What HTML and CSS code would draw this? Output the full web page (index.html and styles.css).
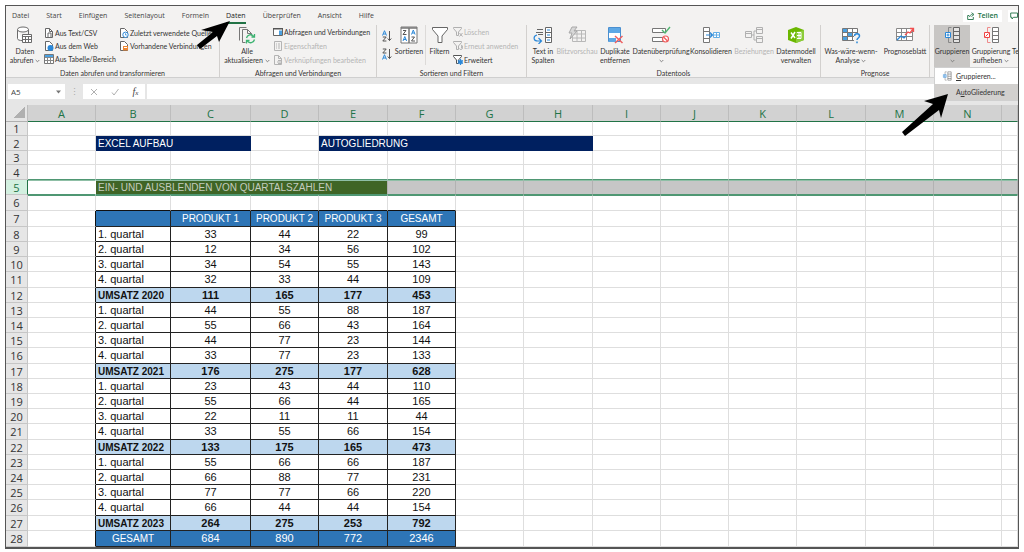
FILE: index.html
```html
<!DOCTYPE html>
<html lang="de">
<head>
<meta charset="utf-8">
<title>Excel – AutoGliederung</title>
<link rel="stylesheet" href="styles.css">
</head>
<body>
<svg class="sprite" aria-hidden="true">
  <symbol id="i-db" viewBox="0 0 18 18"><g fill="#fff" stroke="#6b6b6b"><path d="M1.500 3.500v9c0 1.500 2 2 5 2"/><path d="M12.500 8V3.500"/><ellipse cx="7" cy="3.500" rx="5.500" ry="2.500"/><path d="M6.500 8.500h9v8h-9z"/><path d="M6.500 10.500h9M6.500 13.500h9M9.500 10.500v6M12.500 10.500v6"/></g></symbol>
  <symbol id="i-csv" viewBox="0 0 10 10"><path d="M1.500.500h4l3 3v6h-7z" fill="#fff" stroke="#666"/><path d="M5.500.500v3h3M4 9V5h3v4" fill="none" stroke="#666"/></symbol>
  <symbol id="i-web" viewBox="0 0 10 10"><path d="M1.500.500h4l3 3v6h-7z" fill="#fff" stroke="#666"/><circle cx="6.500" cy="7" r="3" fill="#2b88d8"/></symbol>
  <symbol id="i-tab" viewBox="0 0 10 10"><path d="M.500.500h9v9h-9z" fill="#fff" stroke="#777"/><path d="M1 1h8v2H1z" fill="#4ba0e0"/><path d="M1 3.500h8M1 6.500h8M3.500 3.500v6M6.500 3.500v6" stroke="#888"/></symbol>
  <symbol id="i-recent" viewBox="0 0 10 10"><path d="M1.500.500h4l3 3v6h-7z" fill="#fff" stroke="#666"/><circle cx="6.500" cy="6.800" r="2.700" fill="#fff" stroke="#2b88d8"/><path d="M6.500 5.300v1.700h1.300" fill="none" stroke="#2b88d8" stroke-width=".8"/></symbol>
  <symbol id="i-conn" viewBox="0 0 10 10"><path d="M1.500.500h4l3 3v6h-7z" fill="#fff" stroke="#666"/><path d="M4 5h5v4.500H4z" fill="#ed8733"/><path d="M5 6.500h3" stroke="#fff"/></symbol>
  <symbol id="i-refresh" viewBox="0 0 18 18"><path d="M1.500 14.500v-13h7M4.500 16.500v-13h5l4 4v2M9.500 3.500v4h4M4.500 16.500h3" fill="none" stroke="#777"/><path d="M8.500 12a4 4 0 0 1 7.200-1.500M16.500 13.500a4 4 0 0 1-7.200 1.500M16.500 8v3h-3M8.500 17.500v-3h3" fill="none" stroke="#3cb371" stroke-width="1.300"/></symbol>
  <symbol id="i-pane" viewBox="0 0 10 10"><path d="M.500 1.500h9v7h-9z" fill="#fff" stroke="#666"/><path d="M0 1h10v1.500H0z" fill="#555"/><path d="M6 3.500h3v4.500H6z" fill="#4ba0e0"/></symbol>
  <symbol id="i-prop" viewBox="0 0 10 10"><path d="M1.500.500h7v9h-7z" fill="none" stroke="#b4b4b4"/><path d="M3 3h1M5 3h2M3 5h1M5 5h2M3 7h1M5 7h2" stroke="#b4b4b4"/></symbol>
  <symbol id="i-link" viewBox="0 0 10 10"><path d="M1.500.500h4l3 3v6h-7zM5.500.500v3h3" fill="none" stroke="#b4b4b4"/><path d="M4 7h5M5 5.500h3M5 8.500h3" stroke="#b4b4b4"/></symbol>
  <symbol id="i-sort" viewBox="0 0 18 18"><path d="M1 1h16v16H1z" fill="#fff" stroke="#777"/><path d="M1 2h16M9 2v15" stroke="#777" stroke-width="1.500"/><path d="M3 4.500h3L3 8.500h3.500M11.500 11h3l-3 4H15" fill="none" stroke="#555"/><path d="M3 15l1.800-4.500L6.600 15M3.600 13.500h2.400M11.500 8.500l1.800-4.500 1.800 4.500M12.100 7h2.400" fill="none" stroke="#2b88d8"/></symbol>
  <symbol id="i-az" viewBox="0 0 10 12"><path d="M.500 5.500L2.500.700l2 4.800M1.200 4h2.600" fill="none" stroke="#2b88d8"/><path d="M.800 7h3.400L.800 11h3.600" fill="none" stroke="#555"/><path d="M7.500 1v9.500M5.700 8.500l1.800 2 1.800-2" fill="none" stroke="#555"/></symbol>
  <symbol id="i-za" viewBox="0 0 10 12"><path d="M.800 1h3.400L.800 5h3.600" fill="none" stroke="#555"/><path d="M.500 11.500l2-4.800 2 4.800M1.200 10h2.600" fill="none" stroke="#2b88d8"/><path d="M7.500 1v9.500M5.700 8.500l1.800 2 1.800-2" fill="none" stroke="#555"/></symbol>
  <symbol id="i-filter" viewBox="0 0 18 18"><path d="M1.500 1.500h15v2L11 10v6.500H7V10L1.500 3.500z" fill="#fff" stroke="#666"/></symbol>
  <symbol id="i-fclear" viewBox="0 0 10 10"><path d="M.500.500h8v1l-3 3.500v3.500h-2V5l-3-3.500z" fill="none" stroke="#b0b0b0"/><path d="M6.500 6l3 3.500M9.500 6l-3 3.500" stroke="#b0b0b0"/></symbol>
  <symbol id="i-fredo" viewBox="0 0 10 10"><path d="M.500.500h8v1l-3 3.500v3.500h-2V5l-3-3.500z" fill="none" stroke="#b0b0b0"/><path d="M6.500 7.500a1.500 1.500 0 1 0 1.500-2M8 4l2 1.500L8 7" fill="none" stroke="#b0b0b0"/></symbol>
  <symbol id="i-fadv" viewBox="0 0 10 10"><path d="M.500.500h8v1l-3 3.500v3.500h-2V5l-3-3.500z" fill="#fff" stroke="#555"/><path d="M7.500 4v6M4.800 5.500l5.200 3M4.800 8.500l5.200-3" stroke="#2b88d8" stroke-width="1.200"/><circle cx="7.500" cy="7" r="2" fill="#2b88d8"/></symbol>
  <symbol id="i-text" viewBox="0 0 20 18"><path d="M4 3.500h6M3 6.500h7M5 8.500h5" stroke="#666"/><path d="M4 9c-4 1-4 6 1 6h3M5.500 12l3 3-3 3" fill="none" stroke="#2b88d8" stroke-width="1.200"/><path d="M12.500 1.500h6v15h-6zM12.500 6.500h6M12.500 11.500h6" fill="#fff" stroke="#666"/><path d="M14 4h3M14 9h3M14 14h3" stroke="#2b88d8"/></symbol>
  <symbol id="i-flash" viewBox="0 0 20 18"><path d="M5.500 4.500h13v11h-13zM5.500 8h13M5.500 12h13M10 4.500v11M14.500 4.500v11" fill="none" stroke="#b8b8b8"/><path d="M5 1h5L7 5h3l-7 8 2-6H2z" fill="#d8d8d8" stroke="#a8a8a8"/></symbol>
  <symbol id="i-dup" viewBox="0 0 18 18"><path d="M2.500 1.500h12v14h-12z" fill="#fff" stroke="#4a8fd0"/><path d="M3 2h11v5H3zM3 12h7v4H3z" fill="#5ea8e5"/><path d="M9 10l7.500 7M16.500 10L9 17" stroke="#f06060" stroke-width="1.500"/></symbol>
  <symbol id="i-valid" viewBox="0 0 20 18"><path d="M1.500 2.500h13v4h-13zM1.500 11.500h11v4h-11z" fill="#fff" stroke="#777"/><path d="M11 4l3 3 5-6" fill="none" stroke="#4fb56f" stroke-width="1.400"/><circle cx="14.500" cy="13" r="3" fill="#fff" stroke="#ef5b5b" stroke-width="1.200"/><path d="M12.500 11l4 4" stroke="#ef5b5b" stroke-width="1.200"/></symbol>
  <symbol id="i-kons" viewBox="0 0 20 18"><path d="M2.500 1.500h6v15h-6zM2.500 5.500h6M2.500 12.500h6" fill="#fff" stroke="#777"/><path d="M5 9h6M9 6.500L11.500 9 9 11.500" fill="none" stroke="#2b88d8" stroke-width="1.200"/><path d="M12.500 6.500h6v5h-6zM12.500 9h6M15.500 6.500v5" fill="#fff" stroke="#63ade5"/></symbol>
  <symbol id="i-rel" viewBox="0 0 20 18"><path d="M1.500 5.500h6v6h-6zM12.500 1.500h6v6h-6zM12.500 10.500h6v6h-6zM1.500 7.500h6M12.500 3.500h6M12.500 12.500h6M7.500 9H10V5h2.500M10 9v5h2.500" fill="none" stroke="#b0b0b0"/></symbol>
  <symbol id="i-model" viewBox="0 0 18 18"><path d="M1 4l8-3 8 3v10l-8 3-8-3z" fill="#6bb700"/><path d="M9 6l8-2v10l-8 3z" fill="#8ccc3a"/><path d="M4 6.500l4 5.500M8 6L4 12.500" stroke="#fff" stroke-width="1.500"/><path d="M10 6.500h4v6h-4M12 6.500v6M10 9.500h4" fill="none" stroke="#fff"/></symbol>
  <symbol id="i-what" viewBox="0 0 20 18"><path d="M1.500 2.500h15v12h-15z" fill="#fff" stroke="#777"/><path d="M2 3h4.500v4H2zM6.500 7h5v4h-5zM2 11h4.500v3H2z" fill="#4ba0e0"/><path d="M1.500 6.500h15M1.500 10.500h15M6.500 2.500v12M11.500 2.500v12" stroke="#777"/><path d="M13 8h6v10h-6z" fill="#f3f2f1"/><path d="M13.500 10c0-3 5-3 5 0 0 2-2.500 2-2.500 4M16 15.500v1.800" fill="none" stroke="#2b88d8" stroke-width="1.500"/></symbol>
  <symbol id="i-prog" viewBox="0 0 20 18"><path d="M1.500 2.500h16v12h-16zM1.500 6.500h16M1.500 10.500h16M6.500 2.500v12M11.500 2.500v12" fill="#fff" stroke="#888"/><path d="M2 14l4-4 3 2 2-2" fill="none" stroke="#2b88d8" stroke-width="1.300"/><path d="M10 9l3-3 2 1 3-4M15 2.500h3.500V6" fill="none" stroke="#ef5050" stroke-width="1.300"/></symbol>
  <symbol id="i-group" viewBox="0 0 18 18"><path d="M10.500 1.500h6v15h-6zM10.500 5.500h6M10.500 9.500h6M10.500 13.500h6" fill="#fff" fill-opacity=".5" stroke="#666"/><path d="M8.500 1.500h-3v15h3" fill="none" stroke="#888"/><path d="M2.500 6.500h5v5h-5z" fill="#fff" stroke="#2b88d8"/><path d="M5 7.500v3M3.500 9h3" stroke="#2b88d8"/></symbol>
  <symbol id="i-ungroup" viewBox="0 0 18 18"><path d="M10.500 1.500h6v15h-6zM10.500 5.500h6M10.500 9.500h6M10.500 13.500h6" fill="#fff" stroke="#777"/><path d="M8.500 1.500h-3v15h3" fill="none" stroke="#ef8a8a"/><path d="M2.500 6.500h5v5h-5z" fill="#fff" stroke="#ef4444"/><path d="M3.500 10.500l3-3" stroke="#ef4444"/></symbol>
  <symbol id="i-share" viewBox="0 0 8 8"><path d="M2 3.500H.700v4h5.600V5M2.500 5c.5-2 1.500-2.500 3-2.500M4.500.700l2.500 1.800-2.500 2" fill="none" stroke="#217346" stroke-width=".9"/></symbol>
  <symbol id="i-comment" viewBox="0 0 8 8"><path d="M.700 1h6.800v4.300H3.500L2 7V5.300H.700z" fill="none" stroke="#217346" stroke-width=".9"/></symbol>
  <symbol id="i-down" viewBox="0 0 5 4"><path d="M.700 1l1.800 1.800L4.300 1" fill="none" stroke="#777" stroke-width=".9"/></symbol>
</svg>

<main class="app">
  <header class="ribbon">
    <div class="top">
      <nav class="tabs">
        <a href="#">Datei</a><a href="#">Start</a><a href="#">Einfügen</a><a href="#">Seitenlayout</a><a href="#">Formeln</a><a href="#" class="active" aria-current="page">Daten</a><a href="#">Überprüfen</a><a href="#">Ansicht</a><a href="#">Hilfe</a>
      </nav>
      <button class="share"><svg><use href="#i-share"/></svg>Teilen</button>
      <button class="share comment" aria-label="Kommentare"><svg><use href="#i-comment"/></svg></button>
    </div>
    <div class="groups">
      <section class="group g-get">
        <div class="tools">
          <button class="big"><svg><use href="#i-db"/></svg><span>Daten</span><span>abrufen <svg class="dn"><use href="#i-down"/></svg></span></button>
          <div class="list">
            <button><svg><use href="#i-csv"/></svg>Aus Text/CSV</button>
            <button><svg><use href="#i-web"/></svg>Aus dem Web</button>
            <button><svg><use href="#i-tab"/></svg>Aus Tabelle/Bereich</button>
          </div>
          <div class="list">
            <button><svg><use href="#i-recent"/></svg>Zuletzt verwendete Quellen</button>
            <button><svg><use href="#i-conn"/></svg>Vorhandene Verbindungen</button>
          </div>
        </div>
        <h2>Daten abrufen und transformieren</h2>
      </section>
      <section class="group g-conn">
        <div class="tools">
          <button class="big"><svg><use href="#i-refresh"/></svg><span>Alle</span><span>aktualisieren <svg class="dn"><use href="#i-down"/></svg></span></button>
          <div class="list">
            <button><svg><use href="#i-pane"/></svg>Abfragen und Verbindungen</button>
            <button disabled><svg><use href="#i-prop"/></svg>Eigenschaften</button>
            <button disabled><svg><use href="#i-link"/></svg>Verknüpfungen bearbeiten</button>
          </div>
        </div>
        <h2>Abfragen und Verbindungen</h2>
      </section>
      <section class="group g-sort">
        <div class="tools">
          <div class="sorters">
            <button aria-label="Aufsteigend sortieren"><svg><use href="#i-az"/></svg></button>
            <button aria-label="Absteigend sortieren"><svg><use href="#i-za"/></svg></button>
          </div>
          <button class="big"><svg><use href="#i-sort"/></svg><span>Sortieren</span></button>
          <button class="big filter"><svg><use href="#i-filter"/></svg><span>Filtern</span></button>
          <div class="list">
            <button disabled><svg><use href="#i-fclear"/></svg>Löschen</button>
            <button disabled><svg><use href="#i-fredo"/></svg>Erneut anwenden</button>
            <button><svg><use href="#i-fadv"/></svg>Erweitert</button>
          </div>
        </div>
        <h2>Sortieren und Filtern</h2>
      </section>
      <section class="group g-tools">
        <div class="tools">
          <button class="big"><svg><use href="#i-text"/></svg><span>Text in</span><span>Spalten</span></button>
          <button class="big" disabled><svg><use href="#i-flash"/></svg><span>Blitzvorschau</span></button>
          <button class="big"><svg><use href="#i-dup"/></svg><span>Duplikate</span><span>entfernen</span></button>
          <button class="big"><svg><use href="#i-valid"/></svg><span>Datenüberprüfung</span><span><svg class="dn"><use href="#i-down"/></svg></span></button>
          <button class="big"><svg><use href="#i-kons"/></svg><span>Konsolidieren</span></button>
          <button class="big" disabled><svg><use href="#i-rel"/></svg><span>Beziehungen</span></button>
          <button class="big"><svg><use href="#i-model"/></svg><span>Datenmodell</span><span>verwalten</span></button>
        </div>
        <h2>Datentools</h2>
      </section>
      <section class="group g-prog">
        <div class="tools">
          <button class="big"><svg><use href="#i-what"/></svg><span>Was-wäre-wenn-</span><span>Analyse <svg class="dn"><use href="#i-down"/></svg></span></button>
          <button class="big"><svg><use href="#i-prog"/></svg><span>Prognoseblatt</span></button>
        </div>
        <h2>Prognose</h2>
      </section>
      <section class="group g-outline">
        <div class="tools">
          <button class="big pressed" aria-expanded="true"><svg><use href="#i-group"/></svg><span>Gruppieren</span><span><svg class="dn"><use href="#i-down"/></svg></span></button>
          <button class="big"><svg><use href="#i-ungroup"/></svg><span>Gruppierung</span><span>aufheben <svg class="dn"><use href="#i-down"/></svg></span></button>
          <button class="big cut"><svg></svg><span>Te</span></button>
        </div>
        <div class="menu" role="menu">
          <button role="menuitem"><svg><use href="#i-group"/></svg><span><u>G</u>ruppieren...</span></button>
          <button role="menuitem" class="hover"><svg></svg><span>A<u>u</u>toGliederung</span></button>
          <svg class="pointer" viewBox="0 0 48 42"><path d="M47 0L23 7l9 3L1 38l3 4 34-26 2 8z"/></svg>
        </div>
      </section>
    </div>
    <svg class="pointer tabpointer" viewBox="0 0 34 28"><path d="M33 0L4 9l12 2L0 24l3 4 17-13 2 6z"/></svg>
  </header>

  <div class="formula">
    <label class="namebox"><input aria-label="Namenfeld" value="A5"><svg viewBox="0 0 5 4"><path d="M0 .500h5L2.500 3.500z" fill="#777"/></svg></label>
    <span class="dots">⋮</span>
    <div class="fx">
      <button aria-label="Abbrechen"><svg viewBox="0 0 8 8"><path d="M1 1l6 6M7 1L1 7" stroke="#b0b0b0" fill="none"/></svg></button>
      <button aria-label="Eingeben"><svg viewBox="0 0 8 8"><path d="M1 4.500L3 7l4.500-6" stroke="#b0b0b0" fill="none"/></svg></button>
      <button class="fn">f<small>x</small></button>
    </div>
    <input class="entry" aria-label="Bearbeitungsleiste">
  </div>

  <table class="sheet" id="sheet"></table>
</main>
<script src="sheet.js"></script>
</body>
</html>
```

FILE: styles.css
```css
* { box-sizing: border-box; }
body { margin: 0; padding: 5px; background: #fff; font-family: "Open Sans", "Noto Sans", sans-serif; font-size: 7px; color: #444; }
.sprite { position: absolute; width: 0; height: 0; }
.app { border: 1px solid #555; border-width: 1px 1px 2px; overflow: hidden; }
button { font: inherit; color: inherit; background: none; border: 0; padding: 0; margin: 0; white-space: nowrap; }
button:disabled { color: #b4b4b4; }

.ribbon { position: relative; background: #f3f2f1; border-bottom: 1px solid #cfcfcf; }
.top { display: flex; align-items: center; height: 19px; }
.tabs { display: flex; flex: 1; gap: 17px; padding-left: 6px; line-height: 12px; }
.tabs a { color: #444; text-decoration: none; border-bottom: 2px solid transparent; padding-top: 2px; }
.tabs .active { border-color: #217346; color: #222; }
.share { display: flex; align-items: center; gap: 3px; height: 12px; padding: 0 4px; margin-right: 6px; background: #fff; color: #217346; font-weight: 600; }
.share svg { width: 8px; height: 8px; flex: none; }
.comment { width: 10px; margin-right: 0; padding: 0 0 0 2px; overflow: hidden; }

.groups { display: flex; height: 52px; font-family: Lato, "Open Sans", sans-serif; color: #333; }
.group { position: relative; display: flex; flex-direction: column; flex: none; border-right: 1px solid #d2d0ce; }
.group h2 { margin: 0; font-size: 7px; font-weight: 400; line-height: 8px; text-align: center; white-space: nowrap; }
.tools { display: flex; flex: 1; }
.g-get { width: 214px; }
.g-conn { width: 157px; }
.g-sort { width: 150px; }
.g-tools { width: 294px; }
.g-prog { width: 109px; }
.g-outline { flex: 1 1 0; min-width: 0; border-right: 0; padding-left: 4px; }
.big { display: flex; flex-direction: column; align-items: center; line-height: 9px; padding-top: 1px; }
.big > svg { width: 20px; height: 18px; margin-bottom: 3px; flex: none; }
.big span { display: block; }
.dn { width: 5px; height: 4px; }
.list { display: flex; flex-direction: column; }
.list button { display: flex; align-items: center; gap: 1px; height: 14px; text-align: left; }
.list svg { width: 10px; height: 10px; flex: none; }
.g-get .list button { height: 13px; }
.g-get .big { width: 38px; }
.g-get .list { width: 75px; padding-top: 1px; }
.g-conn .big { width: 52px; }
.g-conn .tools { padding-left: 1px; }
.g-sort .tools { padding-left: 5px; }
.sorters { display: flex; flex-direction: column; gap: 6px; padding-top: 5px; width: 11px; }
.sorters button { height: 12px; }
.sorters svg { display: block; width: 10px; height: 12px; }
.g-sort .big { width: 32px; }
.g-sort .filter { width: 28px; border-left: 1px solid #dcdad8; margin-bottom: 4px; }
.g-tools .tools { display: grid; grid-template-columns: 32px 36px 40px 52px 48px 38px 46px; }
.g-prog .tools { display: grid; grid-template-columns: 60px 48px; }
.g-outline .tools { flex: none; height: 42px; display: grid; grid-template-columns: 36px 42px 10px; overflow: hidden; }
.cut { align-items: flex-start; }
.cut > svg { width: 5px; }
.pressed { background: #c8c6c4; }

.menu { position: absolute; z-index: 2; top: 42px; left: 4px; right: 0; background: #fff; border: 1px solid #d0d0d0; border-right: 0; font-size: 7px; }
.menu button { display: flex; align-items: center; gap: 4px; width: 100%; height: 16px; padding-left: 7px; }
.menu button svg { width: 10px; height: 10px; }
.menu .hover { background: #d2d0ce; }
.pointer { position: absolute; fill: #000; }
.menu .pointer { left: -34px; top: 26px; width: 48px; height: 42px; }
.tabpointer { left: 191px; top: 15px; width: 34px; height: 28px; z-index: 2; }

.formula { display: flex; align-items: center; height: 27px; background: #e6e6e6; padding-left: 2px; }
.formula input { border: 0; font: inherit; color: #444; background: #fff; outline: 0; min-width: 0; }
.namebox { display: flex; align-items: center; width: 57px; height: 15px; background: #fff; padding-right: 4px; }
.namebox input { width: 48px; padding: 0 3px; }
.formula .namebox input { font-size: 8px; }
.namebox svg { width: 5px; height: 4px; }
.dots { width: 18px; text-align: center; font-size: 9px; color: #aaa; }
.fx { display: flex; align-items: center; justify-content: space-around; width: 62px; height: 15px; background: #fff; }
.fx svg { display: block; width: 8px; height: 8px; }
.fn { font: italic 10px "Liberation Serif", serif; }
.fn small { font-size: 7px; }
.formula .entry { flex: 1; height: 15px; margin-left: 2px; }

.sheet { width: 100%; table-layout: fixed; border-collapse: separate; border-spacing: 0; font: 11px/13px "Liberation Sans", Arial, sans-serif; color: #111; }
.sheet th, .sheet td { padding: 0; height: 15px; border-right: 1px solid #dedede; border-bottom: 1px solid #dedede; white-space: nowrap; overflow: hidden; }
.sheet .low > * { height: 14px; }
.sheet .high > * { height: 16px; }
.sheet th { font: 11px/13px "Open Sans", "Noto Sans", sans-serif; color: #333; background: #e6e6e6; border-color: #c6c6c6; }
.sheet thead th { height: 17px; background: #d2d2d2; color: #217346; border-right-color: #bdbdbd; border-bottom-color: #217346; }
.sheet thead th:first-child { background: linear-gradient(135deg, transparent 50%, #b0b0b0 50%) 8px 2px / 11px 11px no-repeat #e6e6e6; border-bottom-color: #b0b0b0; }
.sheet td { text-align: center; }
.sheet .name, .sheet .band { text-align: left; padding-left: 2px; }
.sheet .caps, .sheet .band { font-size: 10px; }
.sheet .band { background: #002060; color: #fff; border-color: #002060; }
.sheet .above > td { border-bottom-color: #4f9773; }
.sheet .picked > td { background: #c6c6c6; border-right-color: #b2b2b2; border-top: 1px solid #8fbfa6; border-bottom-color: #4f9773; line-height: 12px; }
.sheet .below > td { border-top: 1px solid #4f9773; line-height: 12px; }
.sheet .picked > th { background: #d3f0e0; color: #217346; border-right-color: #217346; }
.sheet .picked > .cursor { background: #fff; border-right-color: #fff; }
.sheet .picked > .band { background: #3f6526; color: #c4ccbe; }
.sheet .edge { border-right-color: #111; }
.sheet .cap { border-bottom-color: #111; }
.sheet .cell { border-color: #222; }
.sheet .blue { background: #2e75b6; color: #fff; }
.sheet .sum { background: #bdd7ee; font-weight: 700; }
```

FILE: sheet.js
```js
const widths = [22, 68, 75, 80, 68, 69, 68, 68, 69, 68, 68, 68, 69, 68, 68];
const letters = "ABCDEFGHIJKLMN".split("");
const rows = {
  7: ["", "PRODUKT 1", "PRODUKT 2", "PRODUKT 3", "GESAMT"],
  8: ["1. quartal", 33, 44, 22, 99],
  9: ["2. quartal", 12, 34, 56, 102],
  10: ["3. quartal", 34, 54, 55, 143],
  11: ["4. quartal", 32, 33, 44, 109],
  12: ["UMSATZ 2020", 111, 165, 177, 453],
  13: ["1. quartal", 44, 55, 88, 187],
  14: ["2. quartal", 55, 66, 43, 164],
  15: ["3. quartal", 44, 77, 23, 144],
  16: ["4. quartal", 33, 77, 23, 133],
  17: ["UMSATZ 2021", 176, 275, 177, 628],
  18: ["1. quartal", 23, 43, 44, 110],
  19: ["2. quartal", 55, 66, 44, 165],
  20: ["3. quartal", 22, 11, 11, 44],
  21: ["4. quartal", 33, 55, 66, 154],
  22: ["UMSATZ 2022", 133, 175, 165, 473],
  23: ["1. quartal", 55, 66, 66, 187],
  24: ["2. quartal", 66, 88, 77, 231],
  25: ["3. quartal", 77, 77, 66, 220],
  26: ["4. quartal", 66, 44, 44, 154],
  27: ["UMSATZ 2023", 264, 275, 253, 792],
  28: ["GESAMT", 684, 890, 772, 2346]
};
const low = [1, 3];
const high = [6, 7, 11, 16, 21, 26, 28];
const blank = n => "<td></td>".repeat(n);

function body(r) {
  if (r === 2) return blank(1) + '<td class="band" colspan="2">EXCEL AUFBAU</td>' + blank(1) + '<td class="band" colspan="4">AUTOGLIEDRUNG</td>' + blank(7);
  if (r === 5) return '<td class="cursor"></td><td class="band" colspan="4">EIN- UND AUSBLENDEN VON QUARTALSZAHLEN</td>' + blank(10);
  if (r === 6) return blank(1) + '<td class="cap"></td>'.repeat(5) + blank(9);
  if (!rows[r]) return blank(15);
  const blue = r === 7 || r === 28;
  const sum = String(rows[r][0]).startsWith("UMSATZ");
  const cells = rows[r].map((v, i) => {
    const cls = ["cell", i === 0 && !blue && "name", /^[A-Z]/.test(v) && "caps", blue && "blue", sum && "sum"];
    return `<td class="${cls.filter(Boolean).join(" ")}">${v}</td>`;
  }).join("");
  return '<td class="edge"></td>' + cells + blank(9);
}

let html = "<colgroup>" + widths.map(w => `<col style="width:${w}px">`).join("") + "<col></colgroup>";
html += "<thead><tr><th></th>" + letters.map(l => `<th scope="col">${l}</th>`).join("") + "<th></th></tr></thead><tbody>";
for (let r = 1; r <= 28; r++) {
  const cls = [low.includes(r) && "low", high.includes(r) && "high", r === 4 && "above", r === 5 && "picked", r === 6 && "below"].filter(Boolean).join(" ");
  html += `<tr class="${cls}"><th scope="row">${r}</th>${body(r)}</tr>`;
}
document.getElementById("sheet").innerHTML = html + "</tbody>";
```
